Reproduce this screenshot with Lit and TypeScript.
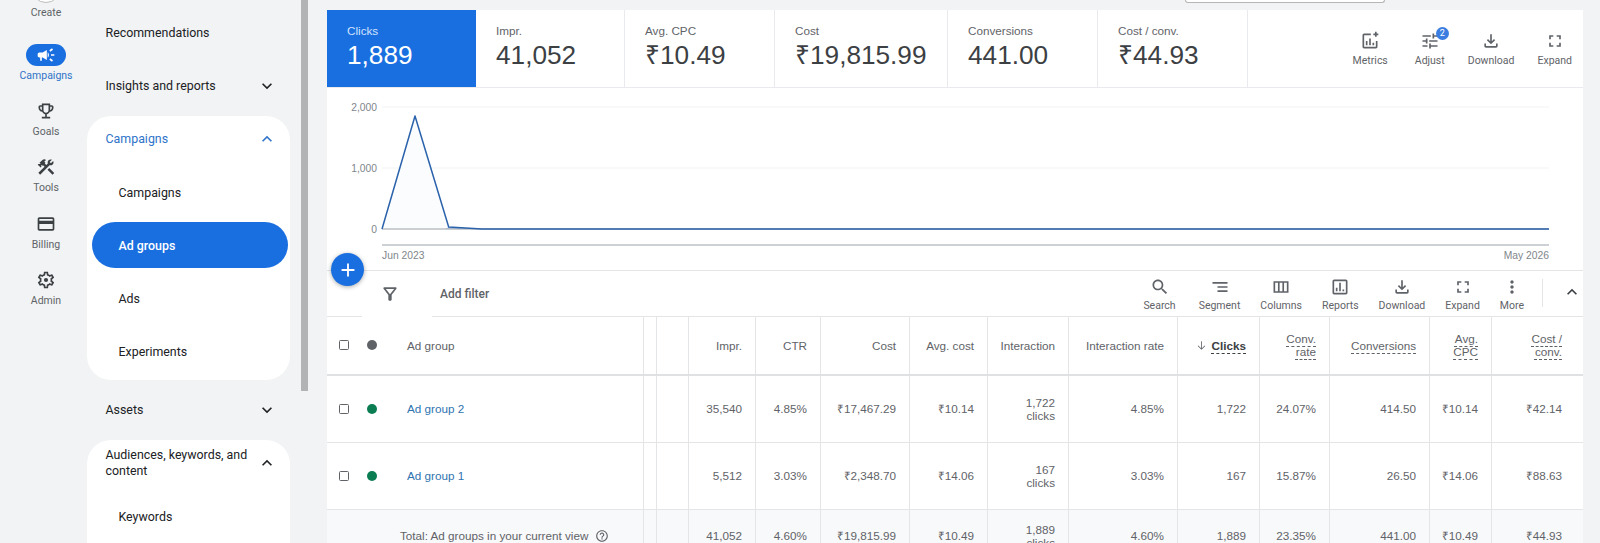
import { LitElement, html, css, svg } from 'lit';
import { customElement } from 'lit/decorators.js';

const I: Record<string, string> = {
  campaign: 'M18 11v2h4v-2h-4zm-2 6.61c.96.71 2.21 1.65 3.2 2.39.4-.53.8-1.07 1.2-1.6-.99-.74-2.24-1.68-3.2-2.4-.4.54-.8 1.08-1.2 1.61zM20.4 5.6c-.4-.53-.8-1.07-1.2-1.6-.99.74-2.24 1.68-3.2 2.4.4.53.8 1.07 1.2 1.6.96-.72 2.21-1.65 3.2-2.4zM4 9c-1.1 0-2 .9-2 2v2c0 1.1.9 2 2 2h1v4h2v-4h1l5 3V6L8 9H4zm11.5 3c0-1.33-.58-2.53-1.5-3.35v6.69c.92-.81 1.5-2.01 1.5-3.34z',
  trophy: 'M19 5h-2V3H7v2H5c-1.1 0-2 .9-2 2v1c0 2.55 1.92 4.63 4.39 4.94.63 1.5 1.98 2.63 3.61 2.96V19H7v2h10v-2h-4v-3.1c1.63-.33 2.98-1.46 3.61-2.96C19.08 12.63 21 10.55 21 8V7c0-1.1-.9-2-2-2zM5 8V7h2v3.82C5.84 10.4 5 9.3 5 8zm7 6c-1.65 0-3-1.35-3-3V5h6v6c0 1.65-1.35 3-3 3zm7-6c0 1.3-.84 2.4-2 2.82V7h2v1z',
  tools: 'M13.78 15.3l6 6 2.11-2.16-6-6zM17.5 10c1.93 0 3.5-1.57 3.5-3.5 0-.58-.16-1.12-.41-1.6l-2.7 2.7-1.49-1.49 2.7-2.7c-.48-.25-1.02-.41-1.6-.41C15.57 3 14 4.57 14 6.5c0 .41.08.8.21 1.16l-1.85 1.85-1.78-1.78.71-.71-1.41-1.41L12 3.49c-1.17-1.17-3.07-1.17-4.24 0L4.22 7.03l1.41 1.41H2.81l-.71.71 3.54 3.54.71-.71V9.15l1.41 1.41.71-.71 1.78 1.78-7.41 7.41 2.12 2.12L16.34 9.79c.36.13.75.21 1.16.21z',
  card: 'M20 4H4c-1.11 0-1.99.89-1.99 2L2 18c0 1.11.89 2 2 2h16c1.11 0 2-.89 2-2V6c0-1.11-.89-2-2-2zm0 14H4v-6h16v6zm0-10H4V6h16v2z',
  gear: 'M19.43 12.98c.04-.32.07-.64.07-.98 0-.34-.03-.66-.07-.98l2.11-1.65c.19-.15.24-.42.12-.64l-2-3.46c-.09-.16-.26-.25-.44-.25-.06 0-.12.01-.17.03l-2.49 1c-.52-.4-1.08-.73-1.69-.98l-.38-2.65C14.46 2.18 14.25 2 14 2h-4c-.25 0-.46.18-.49.42l-.38 2.65c-.61.25-1.17.59-1.69.98l-2.49-1c-.06-.02-.12-.03-.18-.03-.17 0-.34.09-.43.25l-2 3.46c-.13.22-.07.49.12.64l2.11 1.65c-.04.32-.07.65-.07.98 0 .33.03.66.07.98l-2.11 1.65c-.19.15-.24.42-.12.64l2 3.46c.09.16.26.25.44.25.06 0 .12-.01.17-.03l2.49-1c.52.4 1.08.73 1.69.98l.38 2.65c.03.24.24.42.49.42h4c.25 0 .46-.18.49-.42l.38-2.65c.61-.25 1.17-.59 1.69-.98l2.49 1c.06.02.12.03.18.03.17 0 .34-.09.43-.25l2-3.46c.12-.22.07-.49-.12-.64l-2.11-1.65zm-1.98-1.71c.04.31.05.52.05.73 0 .21-.02.43-.05.73l-.14 1.13.89.7 1.08.84-.7 1.21-1.27-.51-1.04-.42-.9.68c-.43.32-.84.56-1.25.73l-1.06.43-.16 1.13-.2 1.35h-1.4l-.19-1.35-.16-1.13-1.06-.43c-.43-.18-.83-.41-1.23-.71l-.91-.7-1.06.43-1.27.51-.7-1.21 1.08-.84.89-.7-.14-1.13c-.03-.31-.05-.54-.05-.74s.02-.43.05-.73l.14-1.13-.89-.7-1.08-.84.7-1.21 1.27.51 1.04.42.9-.68c.43-.32.84-.56 1.25-.73l1.06-.43.16-1.13.2-1.35h1.39l.19 1.35.16 1.13 1.06.43c.43.18.83.41 1.23.71l.91.7 1.06-.43 1.27-.51.7 1.21-1.07.85-.89.7.14 1.13zM12 9.5a2.5 2.5 0 1 0 0 5 2.5 2.5 0 0 0 0-5z',
  search: 'M15.5 14h-.79l-.28-.27C15.41 12.59 16 11.11 16 9.5 16 5.91 13.09 3 9.5 3S3 5.91 3 9.5 5.91 16 9.5 16c1.61 0 3.09-.59 4.23-1.57l.27.28v.79l5 4.99L20.49 19l-4.99-5zm-6 0C7.01 14 5 11.99 5 9.5S7.01 5 9.5 5 14 7.01 14 9.5 11.99 14 9.5 14z',
  segment: 'M9 18h12v-2H9v2zM3 6v2h18V6H3zm6 7h12v-2H9v2z',
  columns: 'M3 5v14h18V5H3zm5.33 12H5V7h3.33v10zm5.34 0h-3.33V7h3.33v10zM19 17h-3.33V7H19v10z',
  reports: 'M19 3H5c-1.1 0-2 .9-2 2v14c0 1.1.9 2 2 2h14c1.1 0 2-.9 2-2V5c0-1.1-.9-2-2-2zm0 16H5V5h14v14zM7 13h2v4H7zm4-6h2v10h-2zm4 8h2v2h-2z',
  download: 'M18 15v3H6v-3H4v3c0 1.1.9 2 2 2h12c1.1 0 2-.9 2-2v-3h-2zm-1-4l-1.41-1.41L13 12.17V4h-2v8.17L8.41 9.59 7 11l5 5 5-5z',
  expand: 'M7 14H5v5h5v-2H7v-3zm-2-4h2V7h3V5H5v5zm12 7h-3v2h5v-5h-2v3zM14 5v2h3v3h2V5h-5z',
  more: 'M12 8c1.1 0 2-.9 2-2s-.9-2-2-2-2 .9-2 2 .9 2 2 2zm0 2c-1.1 0-2 .9-2 2s.9 2 2 2 2-.9 2-2-.9-2-2-2zm0 6c-1.1 0-2 .9-2 2s.9 2 2 2 2-.9 2-2-.9-2-2-2z',
  metrics: 'M19 12v7H5V5h8V3H5c-1.1 0-2 .9-2 2v14c0 1.1.9 2 2 2h14c1.1 0 2-.9 2-2v-7h-2zM7 12h2v5H7zm4-3h2v8h-2zm4 5h2v3h-2zM18 3V1h2v2h2v2h-2v2h-2V5h-2V3z',
  tune: 'M3 17v2h6v-2H3zM3 5v2h10V5H3zm10 16v-2h8v-2h-8v-2h-2v6h2zM7 9v2H3v2h4v2h2V9H7zm14 4v-2H11v2h10zm-6-4h2V7h4V5h-4V3h-2v6z',
  filter: 'M7 6h10l-5.01 6.3L7 6zm-2.75-.39C6.27 8.2 10 13 10 13v6c0 .55.45 1 1 1h2c.55 0 1-.45 1-1v-6s3.72-4.8 5.74-7.39C20.25 4.95 19.78 4 18.95 4H5.04c-.83 0-1.3.95-.79 1.61z',
  help: 'M11 18h2v-2h-2v2zm1-16C6.48 2 2 6.48 2 12s4.48 10 10 10 10-4.48 10-10S17.52 2 12 2zm0 18c-4.41 0-8-3.59-8-8s3.59-8 8-8 8 3.59 8 8-3.59 8-8 8zm0-14c-2.21 0-4 1.79-4 4h2c0-1.1.9-2 2-2s2 .9 2 2c0 2-3 1.75-3 5h2c0-2.25 3-2.5 3-5 0-2.21-1.79-4-4-4z',
  down: 'M7.41 8.59L12 13.17l4.59-4.58L18 10l-6 6-6-6z',
  up: 'M12 8l-6 6 1.41 1.41L12 10.83l4.59 4.58L18 14z',
  arrow: 'M11.25 4h1.5v13l5.2-5.2 1.05 1.05L12 20l-7-7.15 1.05-1.05 5.2 5.2z',
  plus: 'M19 13h-6v6h-2v-6H5v-2h6V5h2v6h6v2z',
};

const icon = (name: string, size = 20) =>
  html`<svg width=${size} height=${size} viewBox="0 0 24 24" fill="currentColor"><path d=${I[name]}></path></svg>`;

// "|" marks a forced line break in a cell
const lines = (text: string) => text.split('|').map((t, i) => (i ? html`<br />${t}` : t));

const railItems = [
  ['campaign', 'Campaigns'],
  ['trophy', 'Goals'],
  ['tools', 'Tools'],
  ['card', 'Billing'],
  ['gear', 'Admin'],
];

const kpis = [
  ['Clicks', '1,889', 149],
  ['Impr.', '41,052', 149],
  ['Avg. CPC', '₹10.49', 150],
  ['Cost', '₹19,815.99', 173],
  ['Conversions', '441.00', 150],
  ['Cost / conv.', '₹44.93', 150],
];

const heads = ['Impr.', 'CTR', 'Cost', 'Avg. cost', 'Interaction', 'Interaction rate'];
const dottedHeads = ['Conv.|rate', 'Conversions', 'Avg.|CPC', 'Cost /|conv.'];

const rows = [
  ['Ad group 2', '35,540', '4.85%', '₹17,467.29', '₹10.14', '1,722|clicks', '4.85%', '1,722', '24.07%', '414.50', '₹10.14', '₹42.14'],
  ['Ad group 1', '5,512', '3.03%', '₹2,348.70', '₹14.06', '167|clicks', '3.03%', '167', '15.87%', '26.50', '₹14.06', '₹88.63'],
];
const total = ['41,052', '4.60%', '₹19,815.99', '₹10.49', '1,889|clicks', '4.60%', '1,889', '23.35%', '441.00', '₹10.49', '₹44.93'];

@customElement('app-root')
export class AppRoot extends LitElement {
  static styles = css`
    :host {
      display: block;
      position: relative;
      width: 1600px;
      height: 543px;
      overflow: hidden;
      background: #f1f3f4;
      font-family: Roboto, 'Noto Sans', sans-serif;
      color: #202124;
    }
    .page { display: flex; align-items: flex-start; height: 543px; }

    /* left rail */
    .rail { width: 82px; padding-left: 5px; flex: none; display: flex; flex-direction: column; align-items: center; color: #5f6368; }
    .create { height: 44px; display: flex; flex-direction: column; align-items: center; }
    .create-circle { width: 30px; height: 30px; margin-top: -27px; border-radius: 50%; background: #fff; border: 1px solid #bdbdbd; box-sizing: border-box; }
    .rail-label { font-size: 10.5px; line-height: 13px; }
    .create .rail-label { margin-top: 3px; }
    .rail-item { height: 56.2px; display: flex; flex-direction: column; align-items: center; }
    .rail-icon { width: 40px; height: 22px; margin-bottom: 3px; display: flex; align-items: center; justify-content: center; border-radius: 11px; color: #3c4043; }
    .rail-item.on .rail-icon { background: #1a6fe0; color: #fff; }
    .rail-item.on .rail-label { color: #2f74c9; }

    /* side nav */
    .nav { width: 214px; flex: none; padding-top: 10px; display: flex; flex-direction: column; gap: 7px; font-size: 12.4px; }
    .row { width: 203px; height: 46px; box-sizing: border-box; padding: 0 13px 0 18.5px; display: flex; align-items: center; justify-content: space-between; line-height: 16px; flex: none; }
    .row svg { flex: none; }
    .panel { width: 203px; background: #fff; border-radius: 24px; display: flex; flex-direction: column; gap: 7px; padding-bottom: 6px; }
    .panel.open-end { border-radius: 24px 24px 0 0; }
    .row.head { color: #2f74c9; }
    .sub { margin: 0 2px 0 5px; width: 196px; height: 46px; box-sizing: border-box; padding-left: 26.5px; display: flex; align-items: center; border-radius: 23px; flex: none; }
    .sub.on { background: #1a6fe0; color: #fff; font-weight: 500; }
    .scrollbar { width: 7px; height: 391px; background: #b1b3b5; flex: none; margin-right: 19px; }

    /* main card */
    .main { width: 1256px; flex: none; font-family: 'Liberation Sans', Arial, sans-serif; }
    .strip { height: 10px; }
    .searchbox { width: 198px; height: 2px; margin-left: 858px; background: #fff; border: 1px solid #b4b6b8; border-top: none; border-radius: 0 0 4px 4px; }
    .kpis { height: 77px; display: flex; background: #fff; border-bottom: 1px solid #e8eaed; }
    .kpi { box-sizing: border-box; padding: 14px 0 0 20px; border-right: 1px solid #e8eaed; flex: none; color: #3c4043; }
    .kpi.on { background: #1a6fe0; color: #fff; border-right: none; }
    .kpi-label { font-size: 11.7px; line-height: 14px; color: #5f6368; }
    .kpi.on .kpi-label { color: #d2e3fc; }
    .kpi-value { font-size: 26.2px; line-height: 32px; margin-top: 1px; }
    .kpi-tools { flex: 1; display: flex; justify-content: flex-end; gap: 23px; padding: 21px 11px 0 0; }
    .tool { display: flex; flex-direction: column; align-items: center; color: #5f6368; font-family: Roboto, sans-serif; font-size: 10.5px; line-height: 13px; position: relative; }
    .tool span { margin-top: 2px; }
    .kpi-tools .tool span { margin-top: 3px; }
    .tool.wide { margin-right: 3px; }
    .kpi-tools .tool.wide { margin-right: 4px; }
    .badge { position: absolute; top: -4px; left: 21px; width: 13px; height: 13px; border-radius: 50%; background: #3b7de0; color: #fff; font-size: 9px; font-weight: 400; line-height: 13px; text-align: center; }
    .chart { height: 182px; background: #fff; border-bottom: 1px solid #e3e5e7; }
    .chart svg { display: block; }
    .chart text { font-family: 'Liberation Sans', Arial, sans-serif; font-size: 10.3px; fill: #80868b; }

    .tbar { height: 45px; background: #fff; border-bottom: 1px solid #e3e5e7; display: flex; align-items: flex-start; }
    .ftab { width: 70px; height: 46px; margin-left: 35px; box-sizing: border-box; padding: 13px 0 0 18px; background: #fff; color: #5f6368; flex: none; position: relative; }
    .addf { margin: 16px 0 0 8px; font-family: Roboto, sans-serif; font-size: 12px; line-height: 14px; font-weight: 500; color: #5f6368; }
    .tools { margin-left: auto; display: flex; gap: 20px; padding-top: 6px; }
    .sep { width: 1px; height: 28px; background: #e3e5e7; margin: 8px 0 0 18px; }
    .collapse { margin: 11px 1px 0 19px; color: #3c4043; }

    .tr { display: grid; grid-template-columns: 317px 13px 32px 67px 65px 89px 78px 81px 109px 82px 70px 100px 62px 91px; background: #fff; font-size: 11.7px; line-height: 13px; color: #5f6368; box-sizing: border-box; }
    .tr > div { box-sizing: border-box; padding: 0 13px 1px 5px; border-right: 1px solid #e3e5e7; display: flex; align-items: center; justify-content: flex-end; text-align: right; }
    .tr > div:last-child { padding-right: 21px; border-right: none; }
    .tr > div.first { justify-content: flex-start; text-align: left; padding: 0 0 1px 12px; }
    .tr > div.gap { padding: 0; }
    .thead { height: 59px; border-bottom: 2px solid #dfe1e3; }
    .body { height: 67px; border-bottom: 1px solid #e3e5e7; }
    .totals { height: 52px; background: #f8f9fa; }
    .box { width: 10px; height: 10px; box-sizing: border-box; border: 1.5px solid #5f6368; border-radius: 1.5px; margin-right: 18px; flex: none; }
    .dot { width: 10px; height: 10px; border-radius: 50%; background: #0b7d52; margin-right: 30px; flex: none; }
    .dot.grey { background: #5f6368; }
    .link { color: #2f74b0; }
    .dotted { text-decoration: underline dashed 1px; text-underline-offset: 2.5px; }
    .sorted { font-weight: 700; color: #3c4043; display: inline-flex; align-items: center; gap: 4px; }
    .sorted svg { color: #5f6368; }
    .total-label { margin-left: 61px; display: flex; align-items: center; gap: 7px; white-space: nowrap; }

    .fab { position: absolute; left: 331px; top: 253px; width: 33px; height: 33px; border-radius: 50%; background: #1a6fe0; color: #fff; display: flex; align-items: center; justify-content: center; box-shadow: 0 1px 4px rgba(60, 64, 67, .45); }
  `;

  private renderChart() {
    // viewBox uses page coordinates so the points read straight off the screenshot
    return html`<svg width="1256" height="182" viewBox="327 88 1256 182">
      ${svg`
        <line x1="382" x2="1549" y1="107" y2="107" stroke="#f1f3f4"></line>
        <line x1="382" x2="1549" y1="168" y2="168" stroke="#f1f3f4"></line>
        <text x="377" y="111" text-anchor="end">2,000</text>
        <text x="377" y="172" text-anchor="end">1,000</text>
        <text x="377" y="233" text-anchor="end">0</text>
        <polygon points="382,229 415,116 448.7,227 482,229" fill="#fbfcfe"></polygon>
        <polygon points="445,229 448.7,227 482,229" fill="#b9d2f0"></polygon>
        <line x1="382" x2="1549" y1="229" y2="229" stroke="#9aa0a6"></line>
        <polyline points="382,229 415,116 448.7,227 482,229 1549,229" fill="none" stroke="#2a62ab" stroke-width="1.5" stroke-linejoin="round"></polyline>
        <line x1="382" x2="1549" y1="245" y2="245" stroke="#bdc1c6" stroke-width="1.5"></line>
        <text x="382" y="259">Jun 2023</text>
        <text x="1549" y="259" text-anchor="end">May 2026</text>
      `}
    </svg>`;
  }

  private renderHeader() {
    return html`<div class="tr thead">
      <div class="first"><i class="box"></i><i class="dot grey"></i>Ad group</div>
      <div class="gap"></div>
      <div class="gap"></div>
      ${heads.map((h) => html`<div>${h}</div>`)}
      <div><span class="sorted">${icon('arrow', 13)}<span class="dotted">Clicks</span></span></div>
      ${dottedHeads.map((h) => html`<div><span class="dotted">${lines(h)}</span></div>`)}
    </div>`;
  }

  render() {
    return html`
      <div class="page">
        <div class="rail">
          <div class="create">
            <div class="create-circle"></div>
            <div class="rail-label">Create</div>
          </div>
          ${railItems.map(
            ([ic, label], i) => html`<div class="rail-item ${i === 0 ? 'on' : ''}">
              <div class="rail-icon">${icon(ic, 20)}</div>
              <div class="rail-label">${label}</div>
            </div>`
          )}
        </div>

        <div class="nav">
          <div class="row">Recommendations</div>
          <div class="row">Insights and reports ${icon('down', 20)}</div>
          <div class="panel">
            <div class="row head">Campaigns ${icon('up', 20)}</div>
            <div class="sub">Campaigns</div>
            <div class="sub on">Ad groups</div>
            <div class="sub">Ads</div>
            <div class="sub">Experiments</div>
          </div>
          <div class="row">Assets ${icon('down', 20)}</div>
          <div class="panel open-end">
            <div class="row">Audiences, keywords, and content ${icon('up', 20)}</div>
            <div class="sub">Keywords</div>
          </div>
        </div>
        <div class="scrollbar"></div>

        <div class="main">
          <div class="strip"><div class="searchbox"></div></div>
          <div class="kpis">
            ${kpis.map(
              ([label, value, w], i) => html`<div class="kpi ${i === 0 ? 'on' : ''}" style="width:${w}px">
                <div class="kpi-label">${label}</div>
                <div class="kpi-value">${value}</div>
              </div>`
            )}
            <div class="kpi-tools">
              <div class="tool wide">${icon('metrics')}<span>Metrics</span></div>
              <div class="tool">${icon('tune')}<b class="badge">2</b><span>Adjust</span></div>
              <div class="tool">${icon('download')}<span>Download</span></div>
              <div class="tool">${icon('expand')}<span>Expand</span></div>
            </div>
          </div>
          <div class="chart">${this.renderChart()}</div>
          <div class="tbar">
            <div class="ftab">${icon('filter')}</div>
            <div class="addf">Add filter</div>
            <div class="tools">
              <div class="tool wide">${icon('search')}<span>Search</span></div>
              <div class="tool">${icon('segment')}<span>Segment</span></div>
              <div class="tool">${icon('columns')}<span>Columns</span></div>
              <div class="tool">${icon('reports')}<span>Reports</span></div>
              <div class="tool">${icon('download')}<span>Download</span></div>
              <div class="tool">${icon('expand')}<span>Expand</span></div>
              <div class="tool">${icon('more')}<span>More</span></div>
            </div>
            <div class="sep"></div>
            <div class="collapse">${icon('up')}</div>
          </div>
          ${this.renderHeader()}
          ${rows.map(
            ([name, ...vals]) => html`<div class="tr body">
              <div class="first"><i class="box"></i><i class="dot"></i><span class="link">${name}</span></div>
              <div class="gap"></div>
              <div class="gap"></div>
              ${vals.map((v) => html`<div><span>${lines(v)}</span></div>`)}
            </div>`
          )}
          <div class="tr totals">
            <div class="first"><span class="total-label">Total: Ad groups in your current view ${icon('help', 14)}</span></div>
            <div class="gap"></div>
            <div class="gap"></div>
            ${total.map((v) => html`<div><span>${lines(v)}</span></div>`)}
          </div>
        </div>
      </div>
      <div class="fab">${icon('plus', 22)}</div>
    `;
  }
}
